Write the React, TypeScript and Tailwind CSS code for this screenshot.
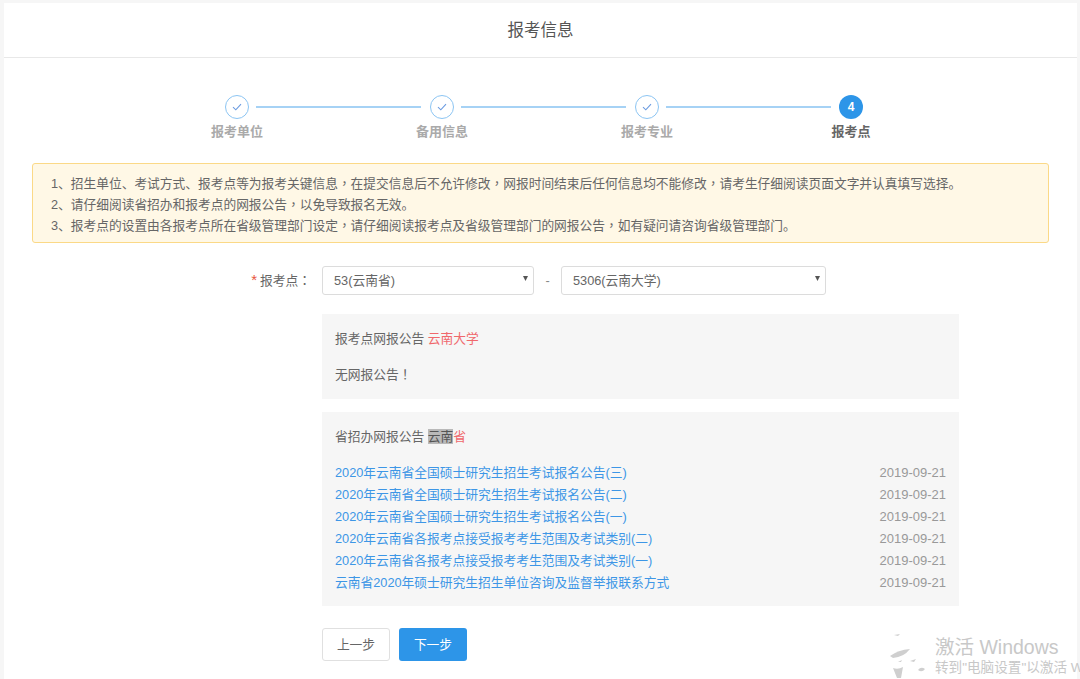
const font = { fontFamily: '"Liberation Sans", "Noto Sans CJK SC", sans-serif' };

const steps = ['报考单位', '备用信息', '报考专业', '报考点'];

const notices = [
  '2020年云南省全国硕士研究生招生考试报名公告(三)',
  '2020年云南省全国硕士研究生招生考试报名公告(二)',
  '2020年云南省全国硕士研究生招生考试报名公告(一)',
  '2020年云南省各报考点接受报考考生范围及考试类别(二)',
  '2020年云南省各报考点接受报考考生范围及考试类别(一)',
  '云南省2020年硕士研究生招生单位咨询及监督举报联系方式',
];

// the reference centres full-width punctuation in its box, the TC cut of the font does too
function Zh({ text }: { text: string }) {
  return (
    <>
      {text.split(/([，！：])/).map((part, i) =>
        i % 2 === 1 ? (
          <span key={i} className="font-['Noto_Sans_CJK_TC']">{part}</span>
        ) : (
          part
        ),
      )}
    </>
  );
}

function Step({ label, index }: { label: string; index: number }) {
  const active = index === 3;
  return (
    <div className="flex flex-col items-center w-6 shrink-0">
      {active ? (
        <div className="w-6 h-6 rounded-full bg-[#2d95e8] text-white text-[12px] font-bold flex items-center justify-center">
          {index + 1}
        </div>
      ) : (
        <div className="w-6 h-6 rounded-full border border-[#8cc5f3] flex items-center justify-center">
          <svg width="10" height="8" viewBox="0 0 10 8" fill="none" stroke="#6b9be0" strokeWidth="1.1">
            <path d="M1 4.2 L3.8 6.8 L9 1.2" />
          </svg>
        </div>
      )}
      <div className={`mt-px whitespace-nowrap text-[13px] leading-[24px] font-bold ${active ? 'text-[#666]' : 'text-[#aaa]'}`}>
        {label}
      </div>
    </div>
  );
}

function Select({ value, className }: { value: string; className: string }) {
  return (
    <div className={`h-[29px] border border-[#dcdcdc] rounded-[3px] bg-white pl-[11px] pr-[5px] flex items-center justify-between text-[12.75px] text-[#666] ${className}`}>
      <span>{value}</span>
      <svg width="5" height="5" viewBox="0 0 5 5" className="mb-[4px]">
        <path d="M0 0 H5 L2.5 5 Z" fill="#555" />
      </svg>
    </div>
  );
}

export default function App() {
  return (
    <div className="w-[1080px] h-[679px] overflow-hidden bg-[#f6f6f6] pt-[3px] pl-[4px] relative" style={font}>
      <div className="w-[1073px] h-[700px] bg-white">
        <div className="h-[55px] border-b border-[#e8e8e8] flex items-center justify-center text-[16.5px] text-[#555]">
          报考信息
        </div>

        <div className="pt-[37px] pl-[221px] flex items-start">
          {steps.map((s, i) => (
            <div key={s} className="flex items-start">
              <Step label={s} index={i} />
              {i < 3 && (
                <div className={`h-[2px] bg-[#a6d2f5] mt-[11px] ml-[7px] w-[165px] ${i === 2 ? 'mr-[8px]' : 'mr-[9px]'}`} />
              )}
            </div>
          ))}
        </div>

        <div className="mx-[28px] mt-[19px] h-[80px] border border-[#fbd987] rounded-[3px] bg-[#fff8e6] pl-[18px] pt-[9px] text-[12.72px] leading-[20px] text-[#666]">
          <p><Zh text="1、招生单位、考试方式、报考点等为报考关键信息，在提交信息后不允许修改，网报时间结束后任何信息均不能修改，请考生仔细阅读页面文字并认真填写选择。" /></p>
          <p><Zh text="2、请仔细阅读省招办和报考点的网报公告，以免导致报名无效。" /></p>
          <p><Zh text="3、报考点的设置由各报考点所在省级管理部门设定，请仔细阅读报考点及省级管理部门的网报公告，如有疑问请咨询省级管理部门。" /></p>
        </div>

        <div className="mt-[23px] flex items-center text-[12.75px] text-[#666]">
          <div className="w-[318px] pr-[11px] flex justify-end items-center">
            <span className="text-[#e8553e] text-[15px] mr-[3px]">*</span>
            <span><Zh text="报考点：" /></span>
          </div>
          <Select value="53(云南省)" className="w-[212px]" />
          <span className="w-[27px] text-center text-[#888]">-</span>
          <Select value="5306(云南大学)" className="w-[265px]" />
        </div>

        <div className="ml-[318px] w-[637px] mt-[19px] h-[85px] bg-[#f6f6f6] pl-[13px] pt-[15px] text-[12.75px] leading-[20px] text-[#666]">
          <div>
            报考点网报公告 <span className="text-[#f0686c]">云南大学</span>
          </div>
          <div className="mt-[15px]"><Zh text="无网报公告！" /></div>
        </div>

        <div className="ml-[318px] w-[637px] mt-[13px] h-[194px] bg-[#f6f6f6] px-[13px] pt-[15px] text-[12.75px] text-[#666]">
          <div className="leading-[20px]">
            省招办网报公告 <span className="bg-[#b9b9b9] text-[#555]">云南</span>
            <span className="text-[#f0686c]">省</span>
          </div>
          <ul className="mt-[15px]">
            {notices.map((n) => (
              <li key={n} className="flex justify-between items-center h-[22px]">
                <span className="text-[#3d96e6]">{n}</span>
                <span className="text-[13px] text-[#999]">2019-09-21</span>
              </li>
            ))}
          </ul>
        </div>

        <div className="ml-[318px] mt-[22px] flex gap-[9px] text-[12.75px]">
          <button className="w-[68px] h-[33px] border border-[#e0e0e0] rounded-[3px] bg-white text-[#666]">上一步</button>
          <button className="w-[68px] h-[33px] rounded-[3px] bg-[#2d95e8] text-white">下一步</button>
        </div>
      </div>

      {/* activation watermark */}
      <div className="absolute left-[890px] top-[634px] w-[190px] h-[45px] overflow-hidden text-[#c8c8c8] whitespace-nowrap">
        <svg width="44" height="45" viewBox="0 0 44 45" className="absolute left-0 top-0" fill="#cfcfcf">
          <path d="M4 1 L10 0 L8 2 Z" />
          <path d="M0 22 Q8 16 20 15 Q14 23 3 24 Z" />
          <path d="M8 28 L12 26 L11 28 Z" />
          <path d="M20 27 L26 25 L24 28 Z" />
          <path d="M3 34 Q8 36 13 33 L11 44 L7 44 Z" />
          <path d="M28 36 Q31 32 35 35 Q32 39 28 36 Z" />
        </svg>
        <div className="absolute left-[45px] top-px text-[19.5px] leading-[24px]">激活 Windows</div>
        <div className="absolute left-[45px] top-[25px] text-[13.6px] leading-[18px]">转到"电脑设置"以激活 Windows</div>
      </div>
    </div>
  );
}
